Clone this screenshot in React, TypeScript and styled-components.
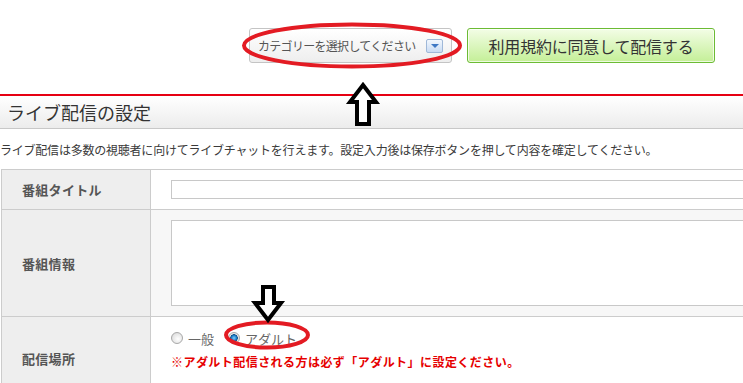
import React from 'react'
import styled, { createGlobalStyle } from 'styled-components'

const GlobalStyle = createGlobalStyle`
    html, body {
        margin: 0;
        padding: 0;
        background: #fff;
        overflow: hidden;
    }
    body {
        font-family: "Noto Sans CJK JP", "Noto Sans", sans-serif;
        color: #333;
    }
`

const StyledPage = styled.div`
    position: relative;
    width: 743px;
    height: 383px;
    overflow: hidden;
`

const StyledTopBar = styled.div`
    display: flex;
    flex-direction: row;
    align-items: flex-start;
    gap: 15px;
    padding: 28px 0 0 249px;
    height: 35px;
`

const StyledSelect = styled.div`
    display: flex;
    flex-direction: row;
    align-items: center;
    justify-content: space-between;
    box-sizing: border-box;
    width: 203px;
    height: 35px;
    padding: 0 8px 0 8px;
    border: 1px solid #c4c4c4;
    border-radius: 3px;
    background: linear-gradient(#ffffff, #eeeeee);
    font-size: 12px;
    letter-spacing: -0.7px;
    color: #555;
`

const StyledDropButton = styled.div`
    display: flex;
    align-items: center;
    justify-content: center;
    box-sizing: border-box;
    width: 17px;
    height: 14px;
    border: 1px solid #9fb8d8;
    border-radius: 2px;
    background: linear-gradient(#f2f7fd, #c9dbf3);
    &::after {
        content: '';
        border-left: 4px solid transparent;
        border-right: 4px solid transparent;
        border-top: 4px solid #3f78c4;
        margin-top: 1px;
    }
`

const StyledAgreeButton = styled.div`
    display: flex;
    align-items: center;
    justify-content: center;
    box-sizing: border-box;
    width: 248px;
    height: 35px;
    border: 1px solid #6cbb34;
    border-radius: 3px;
    background: linear-gradient(#f3fde6, #c4ef97);
    box-shadow: inset 0 0 0 1px rgba(255, 255, 255, 0.7);
    font-size: 16px;
    color: #333;
    letter-spacing: -0.2px;
`

const StyledRedRule = styled.div`
    margin-top: 31px;
    height: 2px;
    background: #e60012;
`

const StyledHeading = styled.h2`
    margin: 0;
    height: 32px;
    line-height: 32px;
    padding-left: 7px;
    border-bottom: 1px solid #c8c8c8;
    background: linear-gradient(#ffffff, #ececec);
    font-size: 18px;
    font-weight: normal;
    color: #333;
`

const StyledDesc = styled.p`
    margin: 0;
    box-sizing: border-box;
    height: 40px;
    padding-top: 13px;
    line-height: 16px;
    font-size: 12px;
    letter-spacing: -0.22px;
    white-space: nowrap;
    color: #3a3a3a;
`

const StyledTable = styled.div`
    margin-left: 1px;
    border-top: 1px solid #cccccc;
    border-left: 1px solid #cccccc;
`

const StyledRow = styled.div`
    display: grid;
    grid-template-columns: 149px 1fr;
    border-bottom: 1px solid #cccccc;
`

const StyledLabel = styled.div`
    display: flex;
    align-items: center;
    padding-left: 20px;
    background: #eeeeee;
    border-right: 1px solid #cccccc;
    font-size: 13px;
    font-weight: bold;
    letter-spacing: 0.3px;
    color: #555;
`

const StyledValue = styled.div<{ $shade?: boolean; $pad: string }>`
    overflow: hidden;
    padding: ${p => p.$pad};
    background: ${p => (p.$shade ? '#f7f7f7' : '#ffffff')};
`

const StyledInput = styled.div`
    box-sizing: border-box;
    width: 620px;
    height: 19px;
    border: 1px solid #c8c8c8;
    background: #fff;
`

const StyledTextArea = styled.div`
    box-sizing: border-box;
    width: 620px;
    height: 86px;
    border: 1px solid #c8c8c8;
    background: #fff;
`

const StyledRadioGroup = styled.div`
    display: flex;
    flex-direction: row;
    align-items: center;
    gap: 14px;
    height: 16px;
`

const StyledRadioItem = styled.label`
    display: flex;
    align-items: center;
    gap: 5px;
    font-size: 13px;
    color: #666;
`

const StyledRadioDot = styled.span<{ $checked?: boolean }>`
    display: inline-block;
    box-sizing: border-box;
    width: 12px;
    height: 12px;
    border-radius: 50%;
    border: 1px solid #a8a8a8;
    background: ${p =>
        p.$checked
            ? 'radial-gradient(circle, #7fd0ff 0, #1f7fc8 2.5px, #0a4f8c 3.5px, #e4e4e4 4px, #fafafa 100%)'
            : 'radial-gradient(circle at 60% 60%, #ffffff 0, #e6e6e6 60%, #cfcfcf 100%)'};
`

const StyledWarning = styled.div`
    margin-top: 7px;
    font-size: 12px;
    font-weight: bold;
    color: #e60000;
    letter-spacing: 0.45px;
`

const StyledMarks = styled.svg`
    position: absolute;
    top: 0;
    left: 0;
    pointer-events: none;
`

const App = () => {
    return (
        <StyledPage>
            <GlobalStyle />
            <StyledTopBar>
                <StyledSelect>
                    <span>カテゴリーを選択してください</span>
                    <StyledDropButton />
                </StyledSelect>
                <StyledAgreeButton>利用規約に同意して配信する</StyledAgreeButton>
            </StyledTopBar>

            <StyledRedRule />
            <StyledHeading>ライブ配信の設定</StyledHeading>
            <StyledDesc>
                ライブ配信は多数の視聴者に向けてライブチャットを行えます。設定入力後は保存ボタンを押して内容を確定してください。
            </StyledDesc>

            <StyledTable>
                <StyledRow>
                    <StyledLabel>番組タイトル</StyledLabel>
                    <StyledValue $pad="10px 0 10px 20px">
                        <StyledInput />
                    </StyledValue>
                </StyledRow>
                <StyledRow>
                    <StyledLabel>番組情報</StyledLabel>
                    <StyledValue $shade $pad="10px 0 10px 20px">
                        <StyledTextArea />
                    </StyledValue>
                </StyledRow>
                <StyledRow>
                    <StyledLabel>配信場所</StyledLabel>
                    <StyledValue $pad="13px 0 30px 20px">
                        <StyledRadioGroup>
                            <StyledRadioItem>
                                <StyledRadioDot />一般
                            </StyledRadioItem>
                            <StyledRadioItem>
                                <StyledRadioDot $checked />アダルト
                            </StyledRadioItem>
                        </StyledRadioGroup>
                        <StyledWarning>※アダルト配信される方は必ず「アダルト」に設定ください。</StyledWarning>
                    </StyledValue>
                </StyledRow>
            </StyledTable>

            <StyledMarks width="743" height="383" viewBox="0 0 743 383">
                <ellipse cx="352" cy="45.5" rx="108" ry="21" fill="none" stroke="#e31b23" strokeWidth="4" />
                <ellipse cx="267" cy="335" rx="41" ry="12.5" fill="none" stroke="#e31b23" strokeWidth="4" />
                <polygon
                    points="363,85 376,102 369,102 369,124 357,124 357,102 350,102"
                    fill="#fff"
                    stroke="#000"
                    strokeWidth="4"
                    strokeLinejoin="miter"
                />
                <polygon
                    points="263,287 274,287 274,303 281,303 268,320 255,303 263,303"
                    fill="#fff"
                    stroke="#000"
                    strokeWidth="4"
                    strokeLinejoin="miter"
                />
            </StyledMarks>
        </StyledPage>
    )
}

export default App
